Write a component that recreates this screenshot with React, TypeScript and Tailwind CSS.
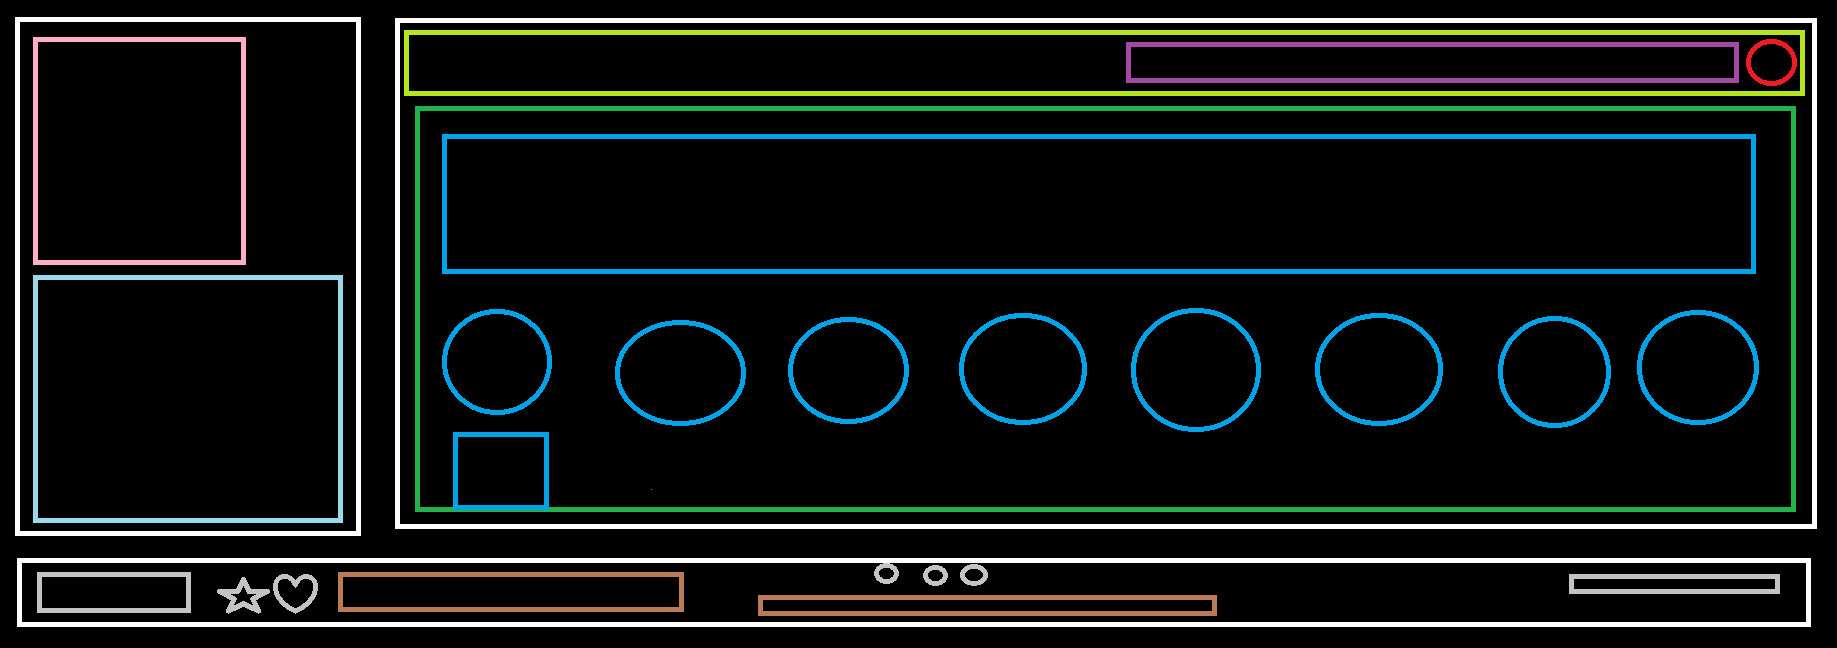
type RingProps = { w: number; h: number; className: string };

function Ring({ w, h, className }: RingProps) {
  return (
    <svg width={w} height={h} viewBox={`0 0 ${w} ${h}`} shapeRendering="crispEdges" className={`block shrink-0 ${className}`}>
      <ellipse cx={w / 2} cy={h / 2} rx={w / 2 - 2.5} ry={h / 2 - 2.5} fill="none" stroke="currentColor" strokeWidth="5" />
    </svg>
  );
}

const rings: RingProps[] = [
  { w: 110, h: 106, className: "mt-[1px]" },
  { w: 131, h: 106, className: "mt-[12px] ml-[63px]" },
  { w: 121, h: 107, className: "mt-[9px] ml-[42px]" },
  { w: 128, h: 112, className: "mt-[5px] ml-[50px]" },
  { w: 130, h: 124, className: "ml-[44px]" },
  { w: 128, h: 113, className: "mt-[5px] ml-[54px]" },
  { w: 113, h: 112, className: "mt-[8px] ml-[55px]" },
  { w: 122, h: 115, className: "mt-[2px] ml-[26px]" },
];

function Sidebar() {
  return (
    <aside className="mt-[17px] flex h-[519px] w-[346px] shrink-0 flex-col gap-[10px] border-[5px] border-white pt-[15px] pl-[13px]">
      <div className="h-[228px] w-[213px] shrink-0 border-[5px] border-[#ffaec9]" />
      <div className="h-[248px] w-[310px] shrink-0 border-[5px] border-[#99d9ea]" />
    </aside>
  );
}

function Main() {
  return (
    <main className="mt-[18px] ml-[34px] flex h-[511px] w-[1422px] shrink-0 flex-col border-[5px] border-white pt-[7px] pl-1">
      <header className="flex h-[66px] w-[1401px] shrink-0 items-start justify-end border-[5px] border-[#b5e61d] pr-[3px]">
        <div className="mt-[7px] mr-[7px] h-[41px] w-[613px] border-[5px] border-[#a349a4]" />
        <Ring w={51} h={47} className="mt-1 text-[#ed1c24]" />
      </header>
      <section className="mt-[10px] ml-[11px] h-[406px] w-[1381px] shrink-0 border-[5px] border-[#22b14c] pt-[23px] pl-[22px]">
        <div className="h-[140px] w-[1314px] border-[5px] border-[#00a2e8]" />
        <div className="mt-[34px] flex h-[124px] items-start text-[#00a2e8]">
          {rings.map((r, i) => (
            <Ring key={i} {...r} />
          ))}
        </div>
        <div className="ml-[11px] flex items-start">
          <div className="h-[78px] w-[96px] border-[5px] border-[#00a2e8]" />
          <div className="mt-[57px] ml-[102px] size-px bg-[#22b14c]" />
        </div>
      </section>
    </main>
  );
}

function BottomBar() {
  return (
    <footer className="mt-[22px] ml-[17px] flex h-[69px] w-[1794px] items-start border-[5px] border-white pl-[15px]">
      <div className="mt-[9px] h-[41px] w-[154px] border-[5px] border-[#c3c3c3]" />
      <svg width="54" height="38" viewBox="217 577 54 38" shapeRendering="crispEdges" className="mt-[14px] ml-[26px] block text-[#c3c3c3]">
        <path
          d="M243.5 579.5 L249.1 591.5 H267.5 L252.8 599 L258.5 611 L243.5 603.8 L228.5 611 L234.2 599 L219.5 591.5 H237.9 Z"
          fill="none"
          stroke="currentColor"
          strokeWidth="5.2"
          strokeLinejoin="round"
        />
      </svg>
      <svg width="46" height="41" viewBox="273 574 46 41" shapeRendering="crispEdges" className="mt-[11px] ml-[2px] block text-[#c3c3c3]">
        <path
          d="M295.5 585 C293.5 579.5 289 576.5 285 576.5 C279 576.5 275.5 581 275.5 587 C275.5 597 284 606 295.5 611.2 C307 606 315.5 597 315.5 587 C315.5 581 312 576.5 306 576.5 C302 576.5 297.5 579.5 295.5 585 Z"
          fill="none"
          stroke="currentColor"
          strokeWidth="5"
          strokeLinejoin="round"
        />
      </svg>
      <div className="mt-[9px] ml-[19px] h-10 w-[346px] border-[5px] border-[#b97a57]" />
      <div className="ml-[74px] flex w-[459px] flex-col">
        <div className="ml-[116px] flex h-8 items-start text-[#c3c3c3]">
          <Ring w={25} h={21} className="" />
          <Ring w={25} h={21} className="mt-[2px] ml-[24px]" />
          <Ring w={28} h={22} className="mt-[1px] ml-[12px]" />
        </div>
        <div className="h-[21px] w-[459px] border-[5px] border-[#b97a57]" />
      </div>
      <div className="mt-[11px] ml-[352px] h-5 w-[211px] border-[5px] border-[#c3c3c3]" />
    </footer>
  );
}

export default function App() {
  return (
    <div className="h-[648px] w-[1837px] overflow-hidden bg-black">
      <div className="flex h-[536px] items-start pl-[15px]">
        <Sidebar />
        <Main />
      </div>
      <BottomBar />
    </div>
  );
}
